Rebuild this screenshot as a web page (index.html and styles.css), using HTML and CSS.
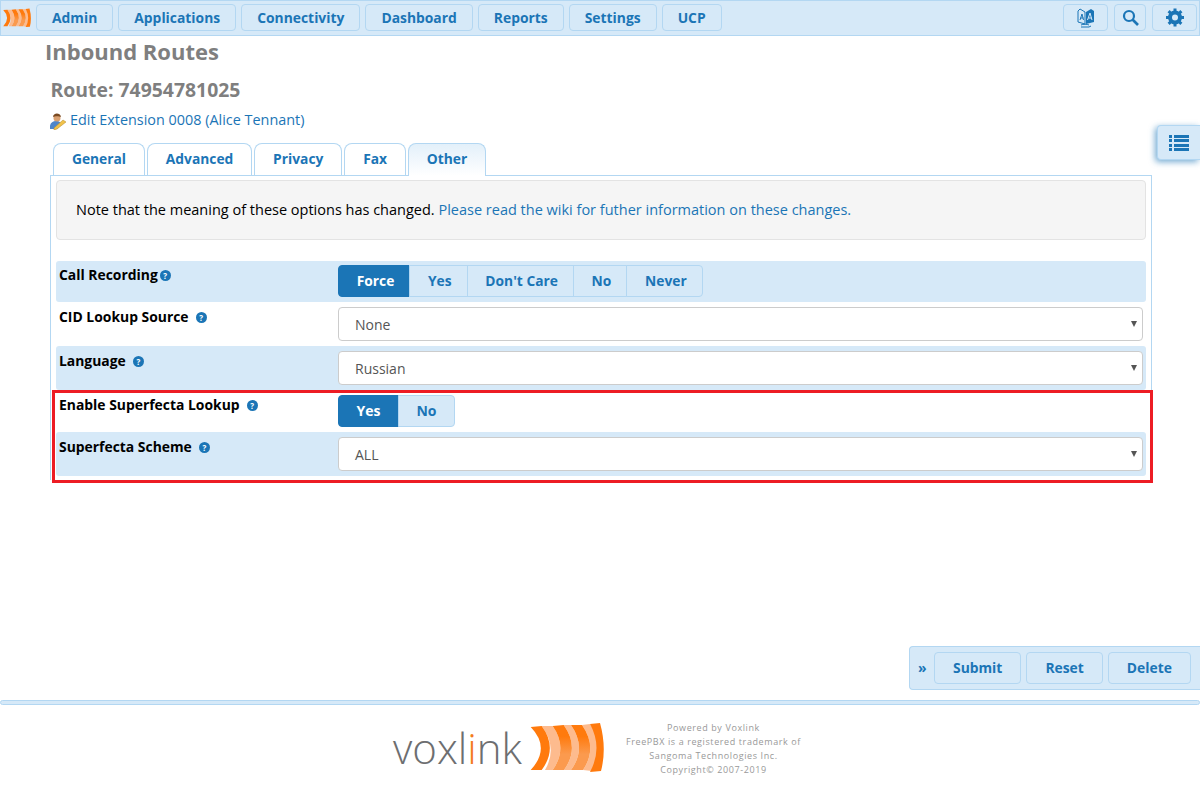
FILE: index.html
```html
<!DOCTYPE html>
<html lang="en">
<head>
    <meta charset="UTF-8">
    <title>Inbound Routes</title>
    <link rel="stylesheet" href="styles.css">
</head>
<body>

    <!-- Voxlink arcs, used in the top bar and in the footer -->
    <svg class="defs" width="0" height="0">
        <defs>
            <linearGradient id="arcFade" x1="0" y1="0" x2="0" y2="1">
                <stop offset="0.25" stop-color="#ff7a0d"/>
                <stop offset="0.65" stop-color="#fb9a4e"/>
            </linearGradient>
            <symbol id="arcs" viewBox="0 0 74 50">
                <path d="M11.700 3L22.700 3Q38 25 22.700 47L15 47Q28 25 11.700 3z" fill="#fdbb8e"/>
                <path d="M33.700 2L41 2Q57 25 41 47L34 47Q50 25 33.700 2z" fill="#fdbb8e"/>
                <path d="M52 2L60 1Q76 25 62 48L53 47Q68 25 52 2z" fill="#fdbb8e"/>
                <path d="M0.700 4L11.700 3Q28 25 11.700 47L0.700 47Q21 25 0.700 4z" fill="#ff7a0d"/>
                <path d="M22.700 3L33.700 2Q50 25 34 47L22.700 47Q38 25 22.700 3z" fill="url(#arcFade)"/>
                <path d="M41 2L52 2Q68 25 53 47L41 47Q57 25 41 2z" fill="url(#arcFade)"/>
                <path d="M60 1L70 0Q77 25 71 48L60 49Q73 25 60 1z" fill="#ff7a0d"/>
            </symbol>
        </defs>
    </svg>

    <nav class="topbar">
        <svg class="brand" width="28" height="20"><use href="#arcs"/></svg>
        <button class="nav-btn">Admin</button>
        <button class="nav-btn">Applications</button>
        <button class="nav-btn">Connectivity</button>
        <button class="nav-btn">Dashboard</button>
        <button class="nav-btn">Reports</button>
        <button class="nav-btn">Settings</button>
        <button class="nav-btn">UCP</button>
        <div class="nav-right">
            <button class="nav-btn icon-btn wide">
                <svg width="18" height="20" viewBox="0 0 18 20">
                    <path d="M1 3l2-2 5 3v12l-7-2z" fill="none" stroke="#1b75b6"/>
                    <path d="M9 4l5-3 3 2v11l-8 2z" fill="#1b75b6"/>
                    <path d="M3 12l2-6 1.500 6M3.500 10h3" fill="none" stroke="#1b75b6"/>
                    <path d="M10.500 12l2.500-7 2 7M11.500 10h3" fill="none" stroke="#d6e9f8"/>
                    <path d="M4 17c2-1 6-1 8 0M4 19h8l2-1" fill="none" stroke="#1b75b6"/>
                </svg>
            </button>
            <button class="nav-btn icon-btn">
                <svg width="17" height="17" viewBox="0 0 17 17">
                    <circle cx="7" cy="7" r="5" fill="none" stroke="#1b75b6" stroke-width="2.200"/>
                    <path d="M10.500 10.500L16 16" stroke="#1b75b6" stroke-width="2.600"/>
                </svg>
            </button>
            <button class="nav-btn icon-btn wide">
                <svg width="18" height="19" viewBox="0 0 18 18">
                    <circle cx="9" cy="9" r="5" fill="none" stroke="#1b75b6" stroke-width="4"/>
                    <path d="M9 0v18M0 9h18M2.600 2.600l12.800 12.800M15.400 2.600L2.600 15.400" stroke="#1b75b6" stroke-width="3" stroke-dasharray="3 12 3"/>
                </svg>
            </button>
        </div>
    </nav>

    <button class="side-tab">
        <svg width="20" height="16" viewBox="0 0 20 16">
            <path d="M0 0h3v3H0zM5 0h15v3H5zM0 4h3v3H0zM5 4h15v3H5zM0 9h3v3H0zM5 9h15v3H5zM0 13h3v3H0zM5 13h15v3H5z" fill="#1b75b6"/>
        </svg>
    </button>

    <main class="content">
        <h1>Inbound Routes</h1>
        <h2>Route: 74954781025</h2>
        <p class="edit-link">
            <svg width="16" height="17" viewBox="0 0 16 17">
                <path d="M0 16c-1-5 2-8 6-8s5 2 5 3l-4 5z" fill="#4f86c9"/>
                <circle cx="7" cy="5" r="3.500" fill="#d9a071"/>
                <path d="M3 4c0-4 7-5 8 0-2-1-6-1-8 0z" fill="#7a4a22"/>
                <path d="M4 15l9-8 3 2-9 7-3 1z" fill="#f0c24a" stroke="#b5892c" stroke-width="0.500"/>
            </svg>
            <a href="#">Edit Extension 0008 (Alice Tennant)</a>
        </p>

        <ul class="tabs">
            <li>General</li>
            <li>Advanced</li>
            <li>Privacy</li>
            <li>Fax</li>
            <li class="active">Other</li>
        </ul>

        <div class="panel">
            <div class="well">Note that the meaning of these options has changed. <a href="#">Please read the wiki for futher information on these changes.</a></div>

            <div class="row blue first">
                <label>Call Recording<i class="help tight">?</i></label>
                <div class="radios compact">
                    <span class="on">Force</span><span>Yes</span><span>Don't Care</span><span>No</span><span>Never</span>
                </div>
            </div>
            <div class="row tall">
                <label>CID Lookup Source<i class="help">?</i></label>
                <div class="select">None</div>
            </div>
            <div class="row blue tall">
                <label>Language<i class="help">?</i></label>
                <div class="select">Russian</div>
            </div>
            <div class="row">
                <label>Enable Superfecta Lookup<i class="help">?</i></label>
                <div class="radios">
                    <span class="on">Yes</span><span>No</span>
                </div>
            </div>
            <div class="row blue tall">
                <label>Superfecta Scheme<i class="help">?</i></label>
                <div class="select">ALL</div>
            </div>
            <div class="highlight"></div>
        </div>
    </main>

    <div class="actions">
        <span class="chevrons">&raquo;</span>
        <button class="nav-btn">Submit</button>
        <button class="nav-btn">Reset</button>
        <button class="nav-btn">Delete</button>
    </div>

    <footer>
        <div class="footer-line"></div>
        <div class="footer-body">
            <div class="logo">
                <span class="wordmark">vox<span class="dim">l</span><span class="orange">i</span>nk</span>
                <svg width="74" height="50"><use href="#arcs"/></svg>
            </div>
            <div class="legal">
                Powered by Voxlink<br>
                FreePBX is a registered trademark of<br>
                Sangoma Technologies Inc.<br>
                Copyright&copy; 2007-2019
            </div>
        </div>
    </footer>

</body>
</html>
```

FILE: styles.css
```css
* {
    box-sizing: border-box;
}

body {
    margin: 0;
    height: 800px;
    overflow: hidden;
    display: flex;
    flex-direction: column;
    position: relative;
    background-color: #ffffff;
    font-family: 'Open Sans', sans-serif;
    font-size: 14px;
    color: #000000;
}

a {
    color: #1b75b6;
    text-decoration: none;
}

.defs {
    position: absolute;
}

.topbar {
    height: 36px;
    display: flex;
    align-items: flex-start;
    gap: 5px;
    padding: 3px 2px 0 2px;
    background-color: #d6e9f8;
    border: 1px solid #b3d7f2;
}

.brand {
    flex: none;
    margin-top: 4px;
}

.nav-btn {
    height: 27px;
    padding: 0 15px;
    background-color: #d6e9f8;
    border: 1px solid #b3d7f2;
    border-radius: 4px;
    color: #1b75b6;
    font-family: 'Open Sans', sans-serif;
    font-size: 13.870px;
    font-weight: 700;
}

.nav-right {
    margin-left: auto;
    display: flex;
    gap: 6px;
}

.icon-btn {
    width: 32px;
    padding: 0;
    display: flex;
    align-items: center;
    justify-content: center;
}

.wide {
    width: 45px;
}

.side-tab {
    position: absolute;
    top: 125px;
    right: 0;
    width: 43px;
    height: 35px;
    padding: 0;
    display: flex;
    align-items: center;
    justify-content: center;
    background-color: #d6e9f8;
    border: 1px solid #b3d7f2;
    border-right: none;
    border-radius: 4px 0 0 4px;
    box-shadow: -2px 2px 6px rgba(27, 117, 182, 0.6);
}

.content {
    padding: 0 48px 0 51px;
}

h1 {
    margin: 0 0 0 -6px;
    font-size: 22px;
    line-height: 30px;
    font-weight: 700;
    color: #7f7f7f;
}

h2 {
    margin: 11px 0 0 -0.500px;
    font-size: 19.400px;
    line-height: 25px;
    font-weight: 700;
    color: #7f7f7f;
}

.edit-link {
    margin: 8px 0 0 0;
    height: 20px;
    display: flex;
    align-items: center;
    gap: 4px;
    font-size: 14.400px;
    line-height: 20px;
}

.edit-link svg {
    margin-left: -1px;
    margin-top: 3px;
}

.tabs {
    list-style: none;
    margin: 13px 0 0 2px;
    padding: 0;
    height: 32px;
    display: flex;
    gap: 2px;
}

.tabs li {
    height: 32px;
    padding: 5px 17.900px 0;
    border: 1px solid #b3d7f2;
    border-bottom: none;
    border-radius: 8px 8px 0 0;
    color: #1b75b6;
    font-size: 13.800px;
    font-weight: 700;
}

.tabs .active {
    position: relative;
    z-index: 1;
    height: 33px;
    background: linear-gradient(#e3f0fa, #ffffff);
}

.panel {
    position: relative;
    height: 305px;
    margin-left: -1px;
    padding: 4px 5px 0 5px;
    border: 1px solid #b3d7f2;
    border-bottom: none;
}

.well {
    height: 60px;
    padding: 19px 19px;
    background-color: #f5f5f5;
    border: 1px solid #e3e3e3;
    border-radius: 4px;
    font-size: 14.500px;
    line-height: 19px;
}

.row {
    height: 42px;
    padding-top: 5px;
    display: flex;
    border-radius: 3px;
}

.row.first {
    margin-top: 21px;
    height: 41px;
    padding-top: 4px;
}

.row.tall {
    height: 44px;
}

.row.blue {
    background-color: #d6e9f8;
}

.row label {
    width: 282px;
    padding-left: 3px;
    font-size: 13.900px;
    font-weight: 700;
    line-height: 20px;
}

.help {
    display: inline-block;
    width: 11px;
    height: 11px;
    margin-left: 7px;
    border-radius: 50%;
    background-color: #1b75b6;
    color: #ffffff;
    font-size: 8px;
    font-style: normal;
    line-height: 11px;
    text-align: center;
    vertical-align: 1px;
}

.help.tight {
    margin-left: 2px;
}

.radios {
    display: flex;
    height: 32px;
}

.radios span {
    height: 32px;
    padding: 0 17.500px;
    margin-right: -1px;
    background-color: #d6e9f8;
    border: 1px solid #b3d7f2;
    color: #1b75b6;
    font-weight: 700;
    line-height: 30px;
}

.radios.compact span {
    padding: 0 15px 0 17.700px;
    font-size: 13.800px;
}

.radios span:first-child {
    border-radius: 4px 0 0 4px;
}

.radios span:last-child {
    border-radius: 0 4px 4px 0;
}

.radios .on {
    background-color: #1b75b6;
    border-color: #1b75b6;
    color: #ffffff;
}

.select {
    position: relative;
    width: 805px;
    height: 34px;
    padding: 0 16px;
    background-color: #ffffff;
    border: 1px solid #cccccc;
    border-radius: 4px;
    color: #555555;
    line-height: 34px;
}

.select::after {
    content: "";
    position: absolute;
    right: 5px;
    top: 13px;
    border-left: 3px solid transparent;
    border-right: 3px solid transparent;
    border-top: 6px solid #555555;
}

.highlight {
    position: absolute;
    left: 1px;
    right: -2px;
    top: 214px;
    height: 93px;
    border: 3px solid #ed1c24;
}

.actions {
    position: absolute;
    top: 646px;
    right: 0;
    width: 291px;
    height: 44px;
    display: flex;
    align-items: center;
    gap: 5px;
    padding: 0 0 0 8px;
    background-color: #d6e9f8;
    border: 1px solid #b3d7f2;
    border-right: none;
    border-radius: 4px 0 0 4px;
}

.actions .nav-btn {
    height: 32px;
    padding: 0 18px 2px;
}

.chevrons {
    width: 11px;
    color: #1b75b6;
    font-weight: 700;
    font-size: 14px;
    line-height: 20px;
}

footer {
    position: absolute;
    top: 700px;
    left: 0;
    right: 0;
}

.footer-line {
    height: 5px;
    background-color: #d6e9f8;
    border: 1px solid #b3d7f2;
    border-radius: 3px;
}

.footer-body {
    display: flex;
    justify-content: center;
    align-items: flex-start;
    gap: 22px;
    padding: 16px 6px 0 0;
}

.logo {
    display: flex;
    align-items: center;
    gap: 8px;
    margin-top: 2px;
}

.wordmark {
    font-size: 42px;
    font-weight: 300;
    line-height: 50px;
    color: #6d6e70;
}

.orange {
    color: #f47b20;
}

.legal {
    font-size: 9px;
    line-height: 14px;
    letter-spacing: 0.6px;
    color: #999999;
    text-align: center;
}
```
